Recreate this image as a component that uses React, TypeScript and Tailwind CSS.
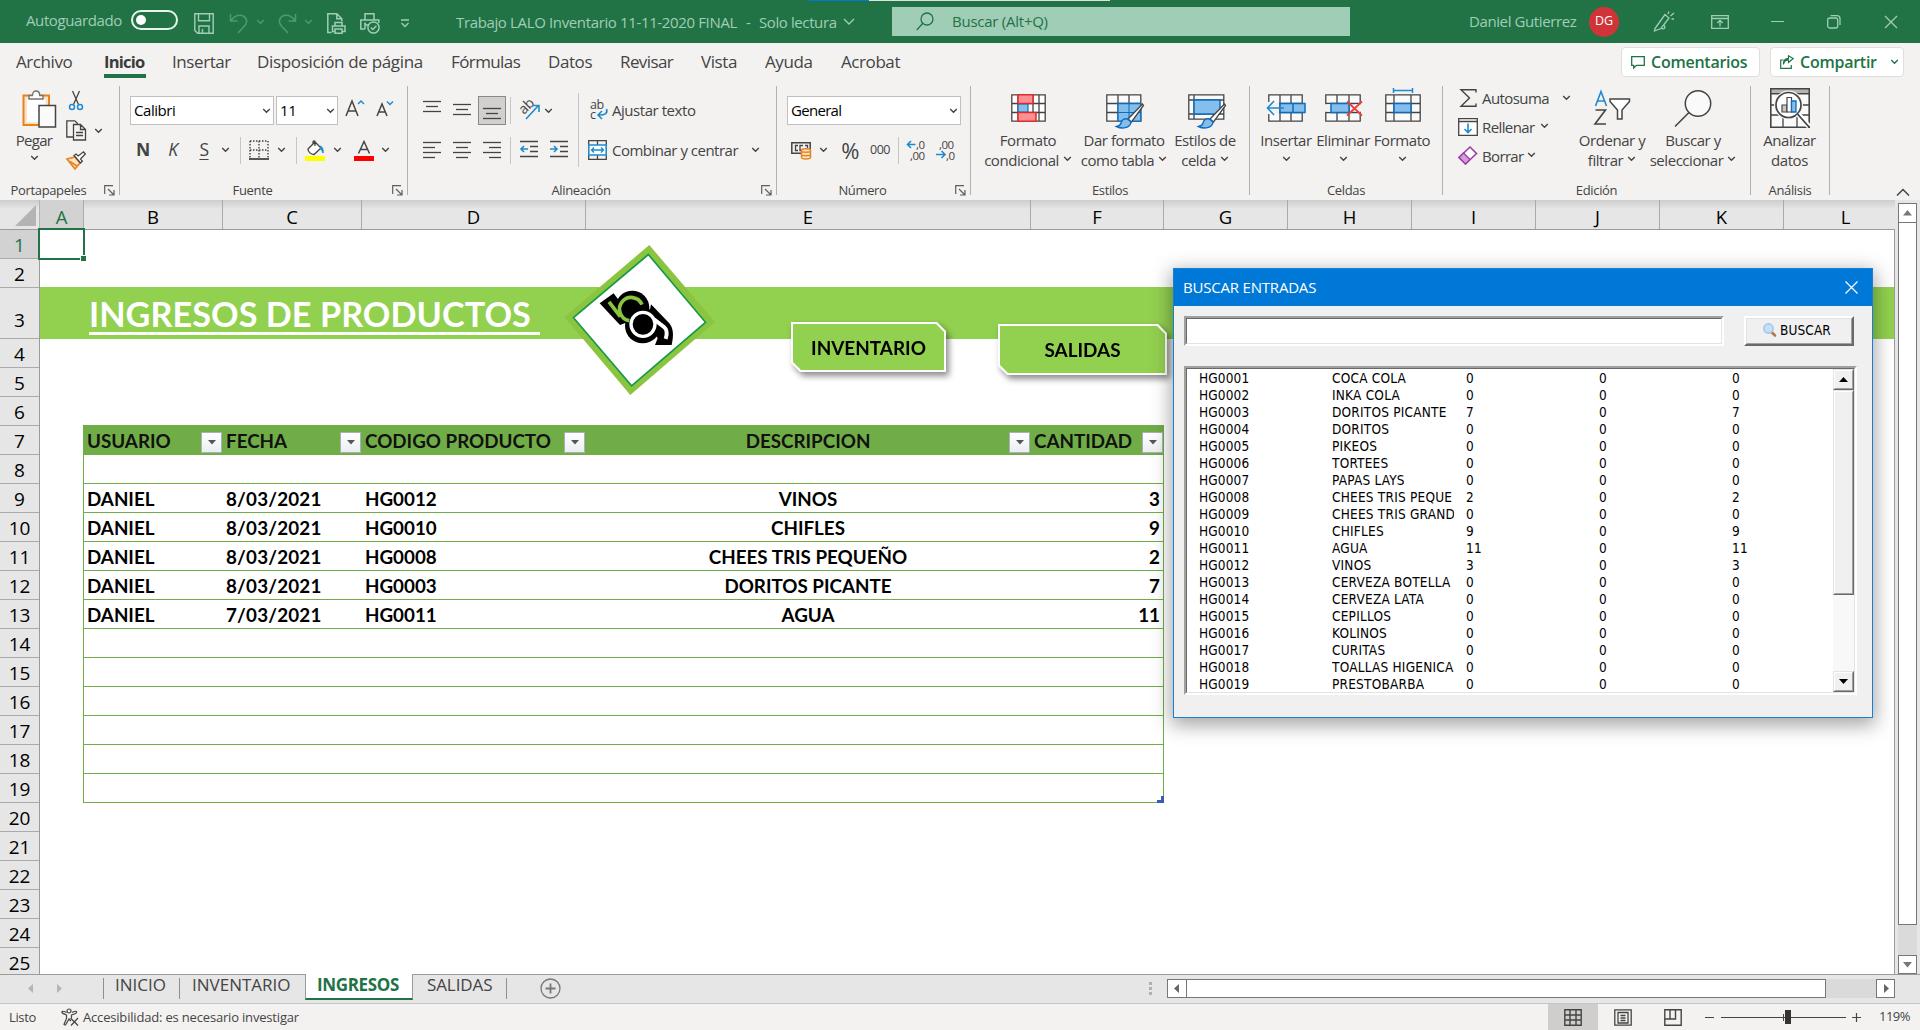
import type { ReactNode } from "react";

const INK = "#444444";
const BLUE = "#1e8bcd";
const MINT = "#a0cdb5";
const DIM = "#4d9a70";

function Svg({ w, h, className = "", children }: { w: number; h: number; className?: string; children: ReactNode }) {
  return (
    <svg width={w} height={h} viewBox={`0 0 ${w} ${h}`} fill="none" className={`shrink-0 overflow-visible ${className}`}>
      {children}
    </svg>
  );
}

function Chevron({ className = "", color = INK }: { className?: string; color?: string }) {
  return (
    <Svg w={9} h={6} className={className}>
      <path d="M1.2 1l3.300 3.300L7.800 1" stroke={color} strokeWidth="1.400" />
    </Svg>
  );
}

/* ---------- Title bar ---------- */

function TitleBar() {
  return (
    <header className="relative flex h-[43px] shrink-0 items-center bg-[#217346] text-[15px] tracking-[-0.4px] whitespace-nowrap text-[#a0cdb5]">
      <div className="absolute top-0 left-[809px] flex h-px w-[301px]">
        <div className="w-[60px] bg-[#0078d7]" />
        <div className="grow bg-[#e1e1e1]" />
      </div>
      <span className="ml-[26px] w-[105px] pb-0.5">Autoguardado</span>
      <div className="mb-[3px] flex h-5 w-[47px] items-center rounded-full border-2 border-[#e8f3ec] pl-[3px]">
        <div className="size-[10px] rounded-full bg-white" />
      </div>
      <Svg w={20} h={21} className="mt-1 ml-4">
        <path d="M.8.8h18.400v19.400H3.600L.8 17.400zM4.500.8v7h11v-7M5 20v-7h10v7M8.500 20v-4" stroke={MINT} strokeWidth="1.400" />
      </Svg>
      <Svg w={20} h={21} className="mt-1 ml-[15px]">
        <path d="M1.500 1v7h7M1.800 7.800C5 3.500 9 1.500 13 2.500c5 1.500 6 7 2.500 10.500L9 20" stroke={DIM} strokeWidth="1.500" />
      </Svg>
      <Chevron className="ml-[7px]" color={DIM} />
      <Svg w={20} h={21} className="mt-1 ml-3">
        <path d="M18.500 1v7h-7M18.200 7.800C15 3.500 11 1.500 7 2.500c-5 1.500-6 7-2.500 10.500L11 20" stroke={DIM} strokeWidth="1.500" />
      </Svg>
      <Chevron className="ml-[7px]" color={DIM} />
      <Svg w={19} h={21} className="mt-1 ml-[14px]">
        <path d="M4.500 19.500H.8V.8h9l5 5v2.500M9.800.8v5h5M8 13V9.500h7V13M8 18.500H5.500V13h12.500v5.500H15M8 16h7v4.200H8z" stroke={MINT} strokeWidth="1.500" />
      </Svg>
      <Svg w={21} h={21} className="mt-1 ml-[14px]">
        <path d="M5 7V.8h9V7M5 16H.8V7h18v3M4 10.500h2M5 16v-4h4" stroke={MINT} strokeWidth="1.500" />
        <circle cx="13.500" cy="14.500" r="5.600" stroke={MINT} strokeWidth="1.500" />
        <path d="M10.800 14.500l2 2 3.600-3.800" stroke={MINT} strokeWidth="1.500" />
      </Svg>
      <Svg w={10} h={9} className="mt-1 ml-[19px]">
        <path d="M1 1h8M1.500 4l3.500 3.500L8.500 4" stroke={MINT} strokeWidth="1.400" />
      </Svg>
      <span className="ml-[46px] w-[290px] pt-0.5 pb-px tracking-[-0.36px]">Trabajo LALO Inventario 11-11-2020 FINAL</span>
      <span className="w-[13px] pt-0.5">-</span>
      <span className="w-[84px] pt-0.5">Solo lectura</span>
      <Svg w={12} h={8}>
        <path d="M1 1l5 5 5-5" stroke={MINT} strokeWidth="1.400" />
      </Svg>
      <div className="ml-[37px] flex h-[29px] w-[458px] items-center bg-[#a0cdb5] text-[#217346]">
        <Svg w={18} h={19} className="ml-6">
          <circle cx="11" cy="7" r="6" stroke="#217346" strokeWidth="1.300" />
          <path d="M6.800 11.300L.8 18" stroke="#217346" strokeWidth="1.300" />
        </Svg>
        <span className="ml-[18px] tracking-[-0.25px]">Buscar (Alt+Q)</span>
      </div>
      <span className="ml-[119px] w-[120px]">Daniel Gutierrez</span>
      <span className="flex size-[30px] items-center justify-center rounded-full bg-[#d13438] text-[12.500px] tracking-normal text-white">DG</span>
      <Svg w={22} h={21} className="ml-[34px]">
        <path d="M2 17.500L12 3.500l4 3.500-8 10.500-4 1.500-2.500 1zM8 17c3 2 5 0 3-3M15 3l1-2.500M17.500 5L21 2M18.500 8h2.500" stroke={MINT} strokeWidth="1.300" />
      </Svg>
      <Svg w={18} h={14} className="ml-[36px]">
        <path d="M.7.7h16.600v12.600H.7zM.7 3.500h16.600M9 11.500v-6M6.300 8L9 5.300 11.700 8" stroke={MINT} strokeWidth="1.300" />
      </Svg>
      <div className="ml-[42px] h-px w-[13px] bg-[#a0cdb5]" />
      <Svg w={14} h={14} className="ml-[43px]">
        <rect x=".7" y="3" width="10" height="10" rx="2" stroke={MINT} strokeWidth="1.300" />
        <path d="M3.500.7h6.500a3 3 0 013 3V10" stroke={MINT} strokeWidth="1.300" />
      </Svg>
      <Svg w={14} h={14} className="ml-[43px]">
        <path d="M1 1l12 12M13 1L1 13" stroke={MINT} strokeWidth="1.300" />
      </Svg>
    </header>
  );
}

/* ---------- Ribbon tabs ---------- */

function RibbonTabs() {
  return (
    <nav className="flex h-[37px] shrink-0 items-center pt-[1px] text-[17px] tracking-[-0.42px] whitespace-nowrap text-[#444]">
      <span className="ml-4 w-[88px]">Archivo</span>
      <span className="relative w-[68px] text-[16.500px] font-bold tracking-[-0.75px] text-[#3b3b3b]">
        Inicio
        <span className="absolute -bottom-[4px] left-0 h-1 w-[42px] bg-[#217346]" />
      </span>
      <span className="w-[85px]">Insertar</span>
      <span className="w-[194px] tracking-[-0.33px]">Disposición de página</span>
      <span className="w-[97px] tracking-[-0.6px]">Fórmulas</span>
      <span className="w-[72px]">Datos</span>
      <span className="w-[81px] tracking-[-0.6px]">Revisar</span>
      <span className="w-[64px]">Vista</span>
      <span className="w-[76px]">Ayuda</span>
      <span className="w-[80px]">Acrobat</span>
      <div className="ml-[700px] flex h-[30px] w-[139px] items-center rounded border border-[#e1dfdd] bg-white text-[16px] font-semibold tracking-[-0.25px] text-[#217346]">
        <Svg w={14} h={13} className="ml-[9px]">
          <path d="M.7.7h12.600v8.600H5.500L2.700 12V9.300h-2z" stroke="#217346" strokeWidth="1.300" />
        </Svg>
        <span className="ml-1.5">Comentarios</span>
      </div>
      <div className="ml-2.5 flex h-[30px] w-[134px] items-center rounded border border-[#e1dfdd] bg-white text-[16px] font-semibold tracking-[-0.25px] text-[#217346]">
        <Svg w={14} h={14} className="ml-[9px]">
          <path d="M3.500 5H.7v8.300h10.600V10M3.500 9.500c.5-3 2-4.700 5-4.700V7.500l4.700-4L8.500.8v2.500C5 3.500 3 6 3.500 9.500z" stroke="#217346" strokeWidth="1.200" />
        </Svg>
        <span className="ml-1.5 w-[90px]">Compartir</span>
        <Chevron color="#217346" />
      </div>
    </nav>
  );
}

/* ---------- Ribbon ---------- */

function Group({ label, width, launcher = false, labelClass = "", children }: { label: string; width: string; launcher?: boolean; labelClass?: string; children: ReactNode }) {
  return (
    <section className={`flex h-[109px] shrink-0 flex-col border-r border-[#b3b0ad] ${width}`}>
      <div className="flex h-[95px] shrink-0">{children}</div>
      <div className={`relative flex h-[18px] shrink-0 items-center justify-center text-[13px] tracking-[-0.35px] ${labelClass}`}>
        {label}
        {launcher && (
          <Svg w={11} h={11} className="absolute top-1 right-1">
            <path d="M.7 9V.7H9M4 4l5.500 5.500M10 5v5H5" stroke="#605e5c" strokeWidth="1.200" />
          </Svg>
        )}
      </div>
    </section>
  );
}

function BigButton({ icon, lines, chevron = "none", width }: { icon: ReactNode; lines: string[]; chevron?: "none" | "inline" | "below"; width: string }) {
  return (
    <div className={`flex shrink-0 flex-col items-center whitespace-nowrap ${width}`}>
      <div className="flex h-[44px] items-start justify-center">{icon}</div>
      {lines.map((line, i) => (
        <span key={line} className="flex h-5 items-center gap-1">
          {line}
          {chevron === "inline" && i === lines.length - 1 && <Chevron className="-mt-0.5" />}
        </span>
      ))}
      {chevron === "below" && <Chevron className="mt-[6px]" />}
    </div>
  );
}

function Divider({ className = "" }: { className?: string }) {
  return <div className={`w-px shrink-0 bg-[#c8c6c4] ${className}`} />;
}

function Combo({ text, className }: { text: string; className: string }) {
  return (
    <div className={`flex h-[29px] shrink-0 items-center justify-between border border-[#c2c0be] bg-white pr-0.5 pl-[3px] text-black ${className}`}>
      <span className="-mt-px">{text}</span>
      <Chevron />
    </div>
  );
}

function AlignIcon({ rows, className = "" }: { rows: [number, number, number][]; className?: string }) {
  return (
    <Svg w={18} h={21} className={className}>
      {rows.map(([y, x1, x2]) => (
        <path key={y} d={`M${x1} ${y + 0.5}H${x2}`} stroke={INK} strokeWidth="1.300" />
      ))}
    </Svg>
  );
}

function ClipboardGroup() {
  return (
    <Group label="Portapapeles" width="w-[120px]" launcher labelClass="pr-[22px]">
      <div className="ml-[17px] flex w-[38px] flex-col items-center">
        <Svg w={35} h={39} className="mt-1 ml-1.5">
          <path d="M1.500 5.500h25.500v29.500H1.500z" fill="#fbe3c4" stroke="#e6831f" strokeWidth="2" />
          <path d="M5 9h18.500v23H5z" fill="#fff" />
          <path d="M7 9V5.500h3.500C10.500 2.500 12 1 14 1s3.700 1.500 3.700 4.500H21V9z" fill="#fff" stroke="#767472" strokeWidth="1.400" />
          <path d="M17 15.500h16.500v21.500H17z" fill="#fafafa" stroke="#444" strokeWidth="1.500" />
        </Svg>
        <span className="mt-px -ml-1 tracking-[-0.75px]">Pegar</span>
        <Chevron className="mt-[5px] -ml-1" />
      </div>
      <div className="ml-[11px] flex flex-col">
        <Svg w={16} h={21} className="mt-1 ml-0.5">
          <path d="M4.500 1l6 13.500M11.500 1l-6 13.500" stroke={INK} strokeWidth="1.300" />
          <circle cx="4" cy="17" r="2.500" stroke={BLUE} strokeWidth="1.500" />
          <circle cx="12" cy="17" r="2.500" stroke={BLUE} strokeWidth="1.500" />
        </Svg>
        <div className="mt-[9px] flex items-center">
          <Svg w={21} h={21}>
            <path d="M7 17H.8V.8h8l3 3" stroke={INK} strokeWidth="1.300" />
            <path d="M7.500 4.500h7l5 5v10.500h-12zM14.500 4.500v5h5M10 12.500h7M10 15.500h7" stroke={INK} strokeWidth="1.300" />
          </Svg>
          <Chevron className="ml-[7px]" />
        </div>
        <Svg w={21} h={20} className="mt-[9px]">
          <path d="M1 9l8-2 5 6-5 6z" fill="#fbe3c4" stroke="#e6831f" strokeWidth="1.700" />
          <path d="M4 11.500L11 16" stroke="#e6831f" strokeWidth="1.500" />
          <path d="M8 5.500l6.500 7.500 1.800-1.800-1.800-2.200 4.800-5L17.500 1.800 12.200 6 10 4z" fill="#fff" stroke={INK} strokeWidth="1.300" />
        </Svg>
      </div>
    </Group>
  );
}

function FontGroup() {
  return (
    <Group label="Fuente" width="w-[288px]" launcher labelClass="pr-[22px]">
      <div className="flex w-full flex-col pt-2.5">
        <div className="flex h-[29px] items-center">
          <Combo text="Calibri" className="ml-[10px] w-[144px]" />
          <Combo text="11" className="ml-0.5 w-[62px]" />
          <Svg w={20} h={20} className="mb-1.5 ml-[7px]">
            <path d="M1 18L7 3l6 15M3 13h8" stroke={INK} strokeWidth="1.500" />
            <path d="M13 6l3-3 3 3" stroke={BLUE} strokeWidth="1.500" />
          </Svg>
          <Svg w={18} h={18} className="mb-1 ml-[11px]">
            <path d="M1 16L6 4l5 12M2.800 12h6.500" stroke={INK} strokeWidth="1.500" />
            <path d="M11 1.500l3 3 3-3" stroke={BLUE} strokeWidth="1.500" />
          </Svg>
        </div>
        <div className="mt-[11px] flex h-[28px] items-center">
          <span className="-mt-0.5 ml-[13px] w-5 text-center text-[17.500px] font-bold">N</span>
          <span className="-mt-0.5 ml-[10px] w-5 text-center text-[17.500px] italic">K</span>
          <span className="-mt-0.5 ml-[11px] w-5 text-center text-[17.500px] underline underline-offset-[3px]">S</span>
          <Chevron className="ml-[7px]" />
          <Divider className="ml-2.5 h-[27px]" />
          <Svg w={20} h={20} className="ml-2">
            <path d="M1 1h18M1 10h18M1 1v17M10 1v17M19 1v17" stroke={INK} strokeWidth="1.400" strokeDasharray="1.500 1.500" />
            <path d="M0 19h20" stroke={INK} strokeWidth="1.800" />
          </Svg>
          <Chevron className="ml-[8px]" />
          <Divider className="ml-2.5 h-[27px]" />
          <Svg w={20} h={21} className="ml-2">
            <path d="M3 9l7-7 6 6-7 6.500c-3 0-6-2.500-6-5.500zM10 6V1.500C10 .5 8 .5 8 2v3" fill="#fff" stroke={INK} strokeWidth="1.300" />
            <path d="M15 6c3 1 3.500 4 3 7-1-2-1.500-3.500-3-4.500" fill={BLUE} stroke={BLUE} />
            <path d="M0 16h20v5H0z" fill="#ffff00" />
          </Svg>
          <Chevron className="ml-2" />
          <Svg w={20} h={21} className="ml-3">
            <path d="M4.500 13.500L10 1.500l5.500 12M6.500 9.500h7" stroke={INK} strokeWidth="1.500" />
            <path d="M0 16h20v5H0z" fill="#ff0000" />
          </Svg>
          <Chevron className="ml-[7px]" />
        </div>
      </div>
    </Group>
  );
}

function AlignGroup() {
  return (
    <Group label="Alineación" width="w-[369px]" launcher labelClass="pr-[22px]">
      <div className="flex w-[170px] flex-col pt-2.5">
        <div className="flex h-[29px] items-center">
          <AlignIcon className="ml-[15px]" rows={[[1, 0, 18], [6, 3, 15], [11, 0, 18]]} />
          <AlignIcon className="ml-3" rows={[[4, 0, 18], [9, 3, 15], [14, 0, 18]]} />
          <div className="ml-[7px] flex h-[29px] w-[28px] items-center justify-center border border-[#8a8886] bg-[#d2d0ce]">
            <AlignIcon rows={[[8, 0, 18], [13, 3, 15], [18, 0, 18]]} />
          </div>
          <Divider className="ml-1 h-[27px]" />
          <Svg w={22} h={21} className="mb-0.5 ml-2">
            <text x="0" y="0" transform="translate(5 16) rotate(-45)" fill={INK} fontSize="14" fontFamily="Open Sans">ab</text>
            <path d="M7 20L19 7M13.500 6.500H20V13" stroke={BLUE} strokeWidth="1.600" />
          </Svg>
          <Chevron className="ml-[3px]" />
        </div>
        <div className="mt-[11px] flex h-[28px] items-center">
          <AlignIcon className="mb-0.5 ml-[15px]" rows={[[3, 0, 18], [8, 0, 12], [13, 0, 18], [18, 0, 12]]} />
          <AlignIcon className="mb-0.5 ml-3" rows={[[3, 0, 18], [8, 3, 15], [13, 0, 18], [18, 3, 15]]} />
          <AlignIcon className="mb-0.5 ml-3" rows={[[3, 0, 18], [8, 6, 18], [13, 0, 18], [18, 6, 18]]} />
          <Divider className="ml-[9px] h-[27px]" />
          <Svg w={18} h={20} className="mb-0.5 ml-[9px]">
            <path d="M0 2.500h18M10 7.500h8M10 12.500h8M0 17.500h18" stroke={INK} strokeWidth="1.300" />
            <path d="M8 10H1.500M4 7l-3 3 3 3" stroke={BLUE} strokeWidth="1.600" />
          </Svg>
          <Svg w={18} h={20} className="mb-0.5 ml-3">
            <path d="M0 2.500h18M10 7.500h8M10 12.500h8M0 17.500h18" stroke={INK} strokeWidth="1.300" />
            <path d="M0 10h6.500M4 7l3 3-3 3" stroke={BLUE} strokeWidth="1.600" />
          </Svg>
        </div>
      </div>
      <Divider className="mt-[7px] h-[74px]" />
      <div className="flex flex-col pt-2.5 pl-[9px]">
        <div className="flex h-[29px] items-center">
          <Svg w={20} h={20} className="mb-0.5 ml-[2px]">
            <text x="0" y="8.500" fill={INK} fontSize="12.500" fontFamily="Open Sans">ab</text>
            <text x="0" y="18.500" fill={INK} fontSize="12.500" fontFamily="Open Sans">c</text>
            <path d="M16.500 9c1.500 4-1 6.500-8.500 6M12 11l-4 4 4 4" stroke={BLUE} strokeWidth="1.600" />
          </Svg>
          <span className="-mt-0.5 ml-[2px]">Ajustar texto</span>
        </div>
        <div className="mt-[11px] flex h-[28px] items-center">
          <Svg w={19} h={20}>
            <path d="M.7.7h17.600v18.600H.7zM9.500.7V5M9.500 15v4" stroke={INK} strokeWidth="1.300" />
            <path d="M.8 5h17.400v10H.8z" fill="#fff" stroke={BLUE} strokeWidth="1.600" />
            <path d="M3.500 10h12M6 7.500L3.500 10 6 12.500M13 7.500l2.500 2.500-2.500 2.500" stroke={BLUE} strokeWidth="1.400" />
          </Svg>
          <span className="ml-[5px] w-[139px] tracking-[-0.5px]">Combinar y centrar</span>
          <Chevron />
        </div>
      </div>
    </Group>
  );
}

function NumberGroup() {
  return (
    <Group label="Número" width="w-[194px]" launcher labelClass="pr-[22px]">
      <div className="flex flex-col pt-2.5">
        <Combo text="General" className="ml-[10px] w-[174px] tracking-[-0.7px]" />
        <div className="mt-[11px] flex h-[28px] items-center">
          <Svg w={21} h={19} className="ml-[14px]">
            <path d="M10 12.300H.8V1.800h18.400V8" stroke={INK} strokeWidth="1.500" />
            <path d="M7 4.500H4.500v5H7M12 4.500H9v5h2M16.500 7V4.500H14" stroke={INK} strokeWidth="1.300" />
            <path d="M10.500 9.500v6.800c0 1 2 1.700 4.500 1.700s4.500-.7 4.500-1.700V9.500c0-2.300-9-2.300-9 0zM10.500 10c0 1.500 9 1.500 9 0M10.500 13.500c0 1.500 9 1.500 9 0" fill="#fbe3c4" stroke="#e6831f" strokeWidth="1.500" />
          </Svg>
          <Chevron className="ml-[7px]" />
          <span className="ml-[11px] w-[22px] text-center text-[22px] leading-none">%</span>
          <span className="ml-[7px] w-[24px] text-center text-[12.500px] tracking-[-0.500px]">000</span>
          <Divider className="ml-[6px] h-[27px]" />
          <Svg w={20} h={22} className="ml-[7px]">
            <path d="M9.500 5.500H1.500M5 2L1.500 5.500 5 9" stroke={BLUE} strokeWidth="1.600" />
            <text x="10" y="9.500" fill={INK} fontSize="11.500" letterSpacing="-.5" fontFamily="Open Sans">,0</text>
            <text x="4" y="20.500" fill={INK} fontSize="11.500" letterSpacing="-.5" fontFamily="Open Sans">,00</text>
          </Svg>
          <Svg w={20} h={22} className="ml-2.5">
            <text x="3" y="9.500" fill={INK} fontSize="11.500" letterSpacing="-.5" fontFamily="Open Sans">,00</text>
            <path d="M0 15.500h8.500M5.500 12L9 15.500 5.500 19" stroke={BLUE} strokeWidth="1.600" />
            <text x="10" y="20.500" fill={INK} fontSize="11.500" letterSpacing="-.5" fontFamily="Open Sans">,0</text>
          </Svg>
        </div>
      </div>
    </Group>
  );
}

function Brush() {
  return (
    <>
      <path d="M36.500 10L22 25l3.500 3L37.500 11.500z" fill="#fff" stroke={INK} strokeWidth="1.300" />
      <path d="M21.500 25c-4-1-6 1.500-6.500 4-.5 2-2 3-4.500 3.500 5 2.500 14 2 14.500-4.500z" fill="#83beec" stroke="#0f6cbd" strokeWidth="1.400" />
    </>
  );
}

function StylesGroup() {
  return (
    <Group label="Estilos" width="w-[279px]">
      <BigButton
        width="w-[90px] ml-[12px]"
        lines={["Formato", "condicional"]}
        chevron="inline"
        icon={
          <Svg w={35} h={28} className="mt-2">
            <path d="M.8.8h33.400v26.400H.8zM.8 9.500h33.400M.8 18.500h33.400M7 .8v26.400M28 .8v26.400M22 .8v26.400" fill="#fff" stroke={INK} strokeWidth="1.300" />
            <path d="M7 10h10v8H7z" fill="#83beec" stroke="#0f6cbd" strokeWidth="1.200" />
            <path d="M7 .8h15v8.700H7zM7 18.500h18v8.700H7z" fill="#ff8f94" stroke="#d92c2c" strokeWidth="1.500" />
          </Svg>
        }
      />
      <BigButton
        width="w-[90px] ml-[6px]"
        lines={["Dar formato", "como tabla"]}
        chevron="inline"
        icon={
          <Svg w={38} h={34} className="mt-2 ml-0.5">
            <path d="M.8.8h34v26.400H.8zM.8 9.500h34M.8 18.500h34M12 .8v26.400M23 .8v26.400" fill="#fafafa" stroke={INK} strokeWidth="1.300" />
            <path d="M12 9.500h22.800v17.700H12z" fill="#83beec" stroke="#0f6cbd" strokeWidth="1.300" />
            <path d="M12 18.500h22.800M23 9.500v17.700" stroke="#0f6cbd" />
            <Brush />
          </Svg>
        }
      />
      <BigButton
        width="w-[74px] -ml-px"
        lines={["Estilos de", "celda"]}
        chevron="inline"
        icon={
          <Svg w={38} h={34} className="mt-2 ml-[3px]">
            <path d="M.8.8h35v24.400H.8zM.8 6h35M.8 20h35M6 .8v24.400" fill="#fafafa" stroke={INK} strokeWidth="1.300" />
            <path d="M6 6h26v14H6z" fill="#83beec" stroke="#0f6cbd" strokeWidth="1.500" />
            <Brush />
          </Svg>
        }
      />
    </Group>
  );
}

function CellsGroup() {
  return (
    <Group label="Celdas" width="w-[193px]">
      <BigButton
        width="w-[50px] ml-[11px]"
        lines={["Insertar"]}
        chevron="below"
        icon={
          <Svg w={40} h={29} className="mt-2">
            <path d="M2.800.8h33.400v26.400H2.800zM2.800 9.500h33.400M2.800 18.500h33.400M14 .8v26.400M25 .8v26.400" fill="#fafafa" stroke={INK} strokeWidth="1.300" />
            <path d="M14 9.500h25v9H14zM27 9.500v9" fill="#83beec" stroke="#0f6cbd" strokeWidth="1.500" />
            <path d="M0 8h13v12H0z" fill="#f3f2f1" />
            <path d="M18 14H2M8 7L1.500 14 8 21" stroke={BLUE} strokeWidth="1.600" />
          </Svg>
        }
      />
      <BigButton
        width="w-[58px] ml-[3px]"
        lines={["Eliminar"]}
        chevron="below"
        icon={
          <Svg w={38} h={29} className="mt-2 ml-px">
            <path d="M.8.8h34.400v26.400H.8zM.8 9.500h34.400M.8 18.500h34.400M12 .8v26.400M24 .8v26.400" fill="#fafafa" stroke={INK} strokeWidth="1.300" />
            <path d="M0 10.200h6v7.600H0zM30 10.200h8v7.600h-8z" fill="#f3f2f1" />
            <path d="M6 9.500h18v9H6z" fill="#83beec" stroke="#0f6cbd" strokeWidth="1.500" />
            <path d="M22 7.500l15 14M37 7.500l-15 14" stroke="#e8413d" strokeWidth="1.800" />
          </Svg>
        }
      />
      <BigButton
        width="w-[60px]"
        lines={["Formato"]}
        chevron="below"
        icon={
          <Svg w={36} h={35} className="mt-0.5 ml-px">
            <path d="M.8 6.800h34.400v26.400H.8zM.8 15.500h34.400M.8 24.500h34.400M9 6.800v26.400M26 6.800v26.400" fill="#fafafa" stroke={INK} strokeWidth="1.300" />
            <path d="M9 15.500h17v9H9z" fill="#83beec" stroke="#0f6cbd" strokeWidth="1.500" />
            <path d="M8.500 2.500h19M8.500 0v5M27.500 0v5" stroke={BLUE} strokeWidth="1.500" />
          </Svg>
        }
      />
    </Group>
  );
}

function EditGroup() {
  return (
    <Group label="Edición" width="w-[308px]">
      <div className="-mt-[3px] ml-[15px] flex w-[118px] flex-col">
        <div className="flex h-[29px] items-center pt-px">
          <Svg w={20} h={18}>
            <path d="M18 3.500V.8H3L11.500 9 3 17.200h15v-2.700" stroke={INK} strokeWidth="1.400" />
          </Svg>
          <span className="ml-[4px] w-[80px] tracking-[-0.58px]">Autosuma</span>
          <Chevron />
        </div>
        <div className="flex h-[29px] items-center">
          <Svg w={20} h={18}>
            <path d="M.7.7h18.600v16.600H.7zM.7 3.500h18.600" fill="#fff" stroke={INK} strokeWidth="1.300" />
            <path d="M10 5.500v8.500M6.500 11L10 14.500l3.500-3.500" stroke={BLUE} strokeWidth="1.600" />
          </Svg>
          <span className="ml-[4px] w-[58px] tracking-[-0.6px]">Rellenar</span>
          <Chevron className="-mt-0.5" />
        </div>
        <div className="flex h-[29px] items-center">
          <Svg w={20} h={19}>
            <path d="M12 1l6.500 6.500-11 10.500L1 11.500z" fill="#fff" stroke="#9b3fa5" strokeWidth="1.600" />
            <path d="M5.500 7L12 13.500 7.500 18 1 11.500z" fill="#d59cdb" stroke="#9b3fa5" strokeWidth="1.400" />
          </Svg>
          <span className="ml-[4px] w-[45px] tracking-[-0.65px]">Borrar</span>
          <Chevron className="-mt-0.5" />
        </div>
      </div>
      <BigButton
        width="w-[72px]"
        lines={["Ordenar y", "filtrar"]}
        chevron="inline"
        icon={
          <Svg w={37} h={36} className="mt-1 ml-px">
            <path d="M1.500 16L7 1.500 12.500 16M3.500 11h7" stroke={BLUE} strokeWidth="1.600" />
            <path d="M1.500 20h10L1 34h11" stroke={INK} strokeWidth="1.600" />
            <path d="M16 9h19.500v2.500L28 20v9h-4.500v-9L16 11.500z" fill="#fff" stroke={INK} strokeWidth="1.500" />
          </Svg>
        }
      />
      <BigButton
        width="w-[92px] -ml-px"
        lines={["Buscar y", "seleccionar"]}
        chevron="inline"
        icon={
          <Svg w={38} h={38} className="mt-1">
            <circle cx="24" cy="13.500" r="12.700" fill="#fafafa" stroke={INK} strokeWidth="1.500" />
            <path d="M15 22.500L1 36.500" stroke={INK} strokeWidth="1.600" />
          </Svg>
        }
      />
    </Group>
  );
}

function AnalysisGroup() {
  return (
    <Group label="Análisis" width="w-[79px]">
      <BigButton
        width="w-[77px]"
        lines={["Analizar", "datos"]}
        icon={
          <Svg w={40} h={40} className="mt-0.5">
            <path d="M.8.800h38.400v38.400H.8z" fill="#fafafa" stroke={INK} strokeWidth="1.600" />
            <path d="M.8.800h38.400v5H.8z" fill="#b5b3b1" stroke={INK} strokeWidth="1.400" />
            <path d="M1 17h38M1 27h38M13 6v33M27 6v33" stroke={INK} strokeWidth="1.300" />
            <circle cx="18.500" cy="17" r="14.500" fill="#f3f2f1" />
            <circle cx="18.500" cy="17" r="12.500" fill="#fff" stroke={INK} strokeWidth="1.700" />
            <path d="M28 26l11 12.500" stroke="#fff" strokeWidth="5" />
            <path d="M27.500 26l11.500 13" stroke={INK} strokeWidth="1.800" />
            <path d="M12 17h5v7h-5z" fill="#c8c6c4" stroke={INK} strokeWidth="1.200" />
            <path d="M17 9.500h4.500V24H17z" fill="#fff" stroke={INK} strokeWidth="1.200" />
            <path d="M21.500 13H26v11h-4.500z" fill="#83beec" stroke="#0f6cbd" strokeWidth="1.300" />
          </Svg>
        }
      />
    </Group>
  );
}

function Ribbon() {
  return (
    <div className="flex h-[120px] shrink-0 pt-[6px] text-[15px] leading-5 tracking-[-0.45px] whitespace-nowrap text-[#444]">
      <ClipboardGroup />
      <FontGroup />
      <AlignGroup />
      <NumberGroup />
      <StylesGroup />
      <CellsGroup />
      <EditGroup />
      <AnalysisGroup />
      <Svg w={14} h={9} className="mt-[102px] ml-[66px]">
        <path d="M1 7.500l6-6 6 6" stroke={INK} strokeWidth="1.500" />
      </Svg>
    </div>
  );
}

/* ---------- Worksheet ---------- */

const columns = [
  { name: "A", width: "w-[44px]" },
  { name: "B", width: "w-[139px]" },
  { name: "C", width: "w-[139px]" },
  { name: "D", width: "w-[224px]" },
  { name: "E", width: "w-[445px]" },
  { name: "F", width: "w-[133px]" },
  { name: "G", width: "w-[124px]" },
  { name: "H", width: "w-[124px]" },
  { name: "I", width: "w-[124px]" },
  { name: "J", width: "w-[124px]" },
  { name: "K", width: "w-[124px]" },
  { name: "L", width: "w-[124px]" },
];

const entries = [
  ["DANIEL", "8/03/2021", "HG0012", "VINOS", "3"],
  ["DANIEL", "8/03/2021", "HG0010", "CHIFLES", "9"],
  ["DANIEL", "8/03/2021", "HG0008", "CHEES TRIS PEQUEÑO", "2"],
  ["DANIEL", "8/03/2021", "HG0003", "DORITOS PICANTE", "7"],
  ["DANIEL", "7/03/2021", "HG0011", "AGUA", "11"],
];
const tableRows: string[][] = [[], ...entries, [], [], [], [], [], []];
const headings = ["USUARIO", "FECHA", "CODIGO PRODUCTO", "DESCRIPCION", "CANTIDAD"];
const cellClass = [
  "w-[138px] pl-[3px]",
  "w-[139px] pl-1 tracking-[0.2px]",
  "w-[224px] pl-1",
  "w-[445px] pl-px text-center",
  "w-[133px] text-right pr-[3px]",
];
const headClass = [
  "w-[138px] pl-[3px]",
  "w-[139px] pl-1",
  "w-[224px] pl-1",
  "w-[445px] pl-px justify-center",
  "w-[133px] pl-1",
];

function ColumnHeaders() {
  return (
    <div className="flex h-[30px] shrink-0 border-b border-[#9b9b9b] bg-linear-to-b from-[#cdcdcd] to-[#e6e6e6] to-[9px] text-[18.500px]">
      <div className="flex w-[40px] shrink-0 items-end justify-end border-r border-[#b4b4b4] pr-[3px] pb-[3px]">
        <Svg w={21} h={21}>
          <path d="M21 0v21H0z" fill="#b4b4b4" />
        </Svg>
      </div>
      {columns.map((c) => (
        <div
          key={c.name}
          className={`flex shrink-0 items-center justify-center border-r border-[#ababab] pt-[4px] ${c.width} ${c.name === "A" ? "bg-[#d2d2d2] text-[#217346]" : "text-black"}`}
        >
          {c.name}
        </div>
      ))}
    </div>
  );
}

function RowHeaders() {
  return (
    <div className="flex w-10 shrink-0 flex-col overflow-hidden border-r border-[#9b9b9b] bg-[#e6e6e6] text-[19px]">
      {Array.from({ length: 25 }, (_, i) => i + 1).map((n) => (
        <div
          key={n}
          className={`flex shrink-0 items-center justify-center border-b border-[#ababab] ${n === 3 ? "h-[51px] pt-[15px]" : "h-[29px] pt-[2px]"} ${n === 1 ? "bg-[#d2d2d2] text-[#217346]" : "text-black"}`}
        >
          {n}
        </div>
      ))}
    </div>
  );
}

function FilterButton() {
  return (
    <span className="mt-[4px] ml-auto flex size-[21px] shrink-0 items-center justify-center border border-[#a9b0b8] bg-linear-to-b from-white to-[#eceef3]">
      <Svg w={8} h={5}>
        <path d="M0 0h8L4 4.500z" fill="#555" />
      </Svg>
    </span>
  );
}

function ProductTable() {
  return (
    <div className="ml-[43px] w-[1081px] border-x border-[#70ad47] font-[Lato] text-[18.8px] font-bold whitespace-nowrap text-black">
      <div className="flex h-[30px] bg-[#70ad47]">
        {headings.map((h, i) => (
          <div key={h} className={`relative flex shrink-0 items-center pt-[3px] text-[#111] ${headClass[i]}`}>
            {h}
            <span className="absolute top-[3px] right-0">
              <FilterButton />
            </span>
          </div>
        ))}
      </div>
      {tableRows.map((row, r) => (
        <div key={r} className="flex h-[29px] items-center border-b border-[#70ad47]">
          {row.map((v, i) => (
            <span key={i} className={`shrink-0 pt-[3px] ${cellClass[i]}`}>
              {v}
            </span>
          ))}
        </div>
      ))}
    </div>
  );
}

function Logo() {
  return (
    <svg className="absolute top-[14px] left-[524px]" width="152" height="152" viewBox="564 244 152 152" fill="none">
      <path d="M649.300 245L715 322l-84.700 73L564.500 317z" fill="#8bc43f" />
      <path d="M648.300 254.500L705.500 322.300 631.600 385.800 573.500 317.700z" fill="#fff" stroke="#159a4a" strokeWidth="1.700" />
      <g transform="translate(570 240) scale(.3333)">
        <path d="M89 190L131 160 190 240l-40 15z" fill="#000" />
        <circle cx="187" cy="203" r="51" fill="#000" />
        <circle cx="218" cy="257" r="53" fill="#000" />
        <path d="M243 193L298 250c12 15 14 35 7 65H255l8-20-30-50z" fill="#000" />
        <path d="M117 186l34 44" stroke="#8bc43f" strokeWidth="11" />
        <path d="M216 194A35 35 0 1 0 178 242" stroke="#8bc43f" strokeWidth="11" />
        <circle cx="219" cy="253" r="36" fill="#000" stroke="#fff" strokeWidth="10" />
        <path d="M252 238l30 23c10 8 11 18 5 36" stroke="#fff" strokeWidth="12" />
      </g>
    </svg>
  );
}

function SnipButton({ label, className }: { label: string; className: string }) {
  return (
    <div className={`absolute drop-shadow-[3px_4px_3px_rgba(0,0,0,0.45)] ${className}`}>
      <div className="size-full bg-white p-0.5 [clip-path:polygon(0_0,calc(100%-9px)_0,100%_9px,100%_100%,9px_100%,0_calc(100%-9px))]">
        <div className="flex size-full items-center justify-center bg-[#92d050] pt-0.5 font-[Lato] text-[18.9px] font-bold text-black [clip-path:polygon(0_0,calc(100%-8px)_0,100%_8px,100%_100%,8px_100%,0_calc(100%-8px))]">
          {label}
        </div>
      </div>
    </div>
  );
}

/* ---------- Search dialog ---------- */

const stock: [string, string, string, string, string][] = [
  ["HG0001", "COCA COLA", "0", "0", "0"],
  ["HG0002", "INKA COLA", "0", "0", "0"],
  ["HG0003", "DORITOS PICANTE", "7", "0", "7"],
  ["HG0004", "DORITOS", "0", "0", "0"],
  ["HG0005", "PIKEOS", "0", "0", "0"],
  ["HG0006", "TORTEES", "0", "0", "0"],
  ["HG0007", "PAPAS LAYS", "0", "0", "0"],
  ["HG0008", "CHEES TRIS PEQUE", "2", "0", "2"],
  ["HG0009", "CHEES TRIS GRANDE", "0", "0", "0"],
  ["HG0010", "CHIFLES", "9", "0", "9"],
  ["HG0011", "AGUA", "11", "0", "11"],
  ["HG0012", "VINOS", "3", "0", "3"],
  ["HG0013", "CERVEZA BOTELLA", "0", "0", "0"],
  ["HG0014", "CERVEZA LATA", "0", "0", "0"],
  ["HG0015", "CEPILLOS", "0", "0", "0"],
  ["HG0016", "KOLINOS", "0", "0", "0"],
  ["HG0017", "CURITAS", "0", "0", "0"],
  ["HG0018", "TOALLAS HIGENICAS", "0", "0", "0"],
  ["HG0019", "PRESTOBARBA", "0", "0", "0"],
];

const sunken = "border-2 border-t-[#a0a0a0] border-l-[#a0a0a0] border-r-white border-b-white";
const sunkenInner = "border border-t-[#696969] border-l-[#696969] border-r-[#e3e3e3] border-b-[#e3e3e3]";
const raised = "border border-t-[#e3e3e3] border-l-[#e3e3e3] border-r-[#696969] border-b-[#696969]";
const raisedInner = "border border-t-white border-l-white border-r-[#a0a0a0] border-b-[#a0a0a0]";

function SearchDialog() {
  return (
    <div className="absolute top-[38px] left-[1133px] flex h-[450px] w-[700px] flex-col border border-[#1a7fd4] bg-[#f0f0f0] font-['DejaVu_Sans_Condensed','DejaVu_Sans'] text-[13.5px] font-stretch-condensed text-black shadow-[0_5px_18px_2px_rgba(0,0,0,0.36)]">
      <div className="flex h-[37px] shrink-0 items-center justify-between bg-[#0078d7] pr-[14px] pl-[9px] font-['Open_Sans'] text-[15px] font-stretch-normal tracking-[-0.2px] text-white">
        BUSCAR ENTRADAS
        <Svg w={13} h={13}>
          <path d="M.5.5l12 12M12.500.5l-12 12" stroke="#fff" strokeWidth="1.200" />
        </Svg>
      </div>
      <div className="mt-[10px] flex shrink-0 gap-5 pl-[10px]">
        <div className={`h-[30px] w-[540px] ${sunken}`}>
          <div className={`size-full bg-white ${sunkenInner}`} />
        </div>
        <div className="h-[30px] w-[110px] border-2 border-t-white border-r-[#696969] border-b-[#696969] border-l-white">
          <div className="flex size-full items-center justify-center gap-[3px] border border-t-[#e3e3e3] border-r-[#a0a0a0] border-b-[#a0a0a0] border-l-[#e3e3e3] pr-[4px] pb-0.5 tracking-[0.1px]">
            <Svg w={14} h={14} className="-mt-[1px]">
              <path d="M8.500 9l3.500 3.500" stroke="#b5794a" strokeWidth="2.600" strokeLinecap="round" />
              <circle cx="5.500" cy="5.500" r="4.700" fill="#c4e0f8" stroke="#9fc3e6" strokeWidth="1.400" />
            </Svg>
            BUSCAR
          </div>
        </div>
      </div>
      <div className={`mt-5 ml-[10px] h-[329px] w-[673px] shrink-0 ${sunken}`}>
        <div className={`flex size-full justify-between bg-white ${sunkenInner}`}>
          <div className="flex flex-col overflow-hidden pt-px pl-3 leading-[17px]">
            {stock.map((row) => (
              <div key={row[0]} className="flex h-[17px] shrink-0 tracking-[0.15px] whitespace-nowrap">
                <span className="w-[133px]">{row[0]}</span>
                <span className="mr-3 w-[122px] overflow-hidden tracking-[0.22px]">{row[1]}</span>
                <span className="w-[133px]">{row[2]}</span>
                <span className="w-[133px]">{row[3]}</span>
                <span className="w-[60px]">{row[4]}</span>
              </div>
            ))}
          </div>
          <div className="flex w-[21px] flex-col bg-[#f8f8f8]">
            <div className={`h-[21px] shrink-0 ${raised}`}>
              <div className={`flex size-full items-center justify-center bg-[#f0f0f0] ${raisedInner}`}>
                <Svg w={9} h={5}>
                  <path d="M4.500 0L9 5H0z" fill="#000" />
                </Svg>
              </div>
            </div>
            <div className={`h-[205px] shrink-0 ${raised}`}>
              <div className={`size-full bg-[#f0f0f0] ${raisedInner}`} />
            </div>
            <div className={`mt-auto h-[21px] shrink-0 ${raised}`}>
              <div className={`flex size-full items-center justify-center bg-[#f0f0f0] ${raisedInner}`}>
                <Svg w={9} h={5}>
                  <path d="M4.500 5L9 0H0z" fill="#000" />
                </Svg>
              </div>
            </div>
          </div>
        </div>
      </div>
    </div>
  );
}

function Sheet() {
  return (
    <div className="relative flex grow flex-col overflow-hidden border-r border-[#9b9b9b] bg-white">
      <div className="h-[57px] shrink-0" />
      <div className="h-[52px] shrink-0 bg-[#92d050] pl-[49px]">
        <div className="h-[48px] w-[451px] border-b-[3px] border-white pt-[6px] font-[Lato] text-[34.2px] leading-[42px] font-bold tracking-[0.05px] whitespace-nowrap text-white">
          INGRESOS DE PRODUCTOS
        </div>
      </div>
      <div className="h-[86px] shrink-0" />
      <ProductTable />
      <Svg w={7} h={7} className="absolute top-[566px] left-[1117px]">
        <path d="M7 0v7H0V4h4V0z" fill="#3b5bb5" />
      </Svg>
      <Logo />
      <SnipButton label="INVENTARIO" className="top-[92px] left-[751px] h-[50px] w-[155px]" />
      <SnipButton label="SALIDAS" className="top-[94px] left-[958px] h-[51px] w-[169px]" />
      <SearchDialog />
    </div>
  );
}

function VerticalScroll() {
  return (
    <div className="mt-[3px] ml-[3px] flex w-[19px] shrink-0 flex-col bg-[#dadada]">
      <div className="flex h-5 shrink-0 items-center justify-center border border-[#777] bg-white">
        <Svg w={9} h={6}>
          <path d="M4.500 0L9 5.500H0z" fill="#777" />
        </Svg>
      </div>
      <div className="-mt-px h-[703px] shrink-0 border border-[#777] bg-white" />
      <div className="mt-auto flex h-[19px] shrink-0 items-center justify-center border border-[#777] bg-white">
        <Svg w={9} h={6}>
          <path d="M4.500 5.500L9 0H0z" fill="#777" />
        </Svg>
      </div>
    </div>
  );
}

function Worksheet() {
  return (
    <div className="flex h-[774px] shrink-0 bg-[#e6e6e6]">
      <div className="relative flex w-[1895px] shrink-0 flex-col overflow-hidden">
        <ColumnHeaders />
        <div className="flex h-[744px] overflow-hidden">
          <RowHeaders />
          <Sheet />
        </div>
        <div className="absolute top-[28px] left-[38px] h-[32px] w-[47px] border-2 border-[#217346]">
          <div className="absolute -right-[3px] -bottom-[3px] size-[6px] border-t border-l border-white bg-[#217346]" />
        </div>
      </div>
      <VerticalScroll />
    </div>
  );
}

/* ---------- Sheet tabs and status bar ---------- */

function SheetTabs() {
  return (
    <div className="flex h-[29px] shrink-0 items-start border-t border-[#9b9b9b] bg-[#e6e6e6] text-[17px] whitespace-nowrap text-[#444]">
      <Svg w={5} h={9} className="mt-[9px] ml-[28px]">
        <path d="M5 0v9L0 4.500z" fill="#b5b5b5" />
      </Svg>
      <Svg w={5} h={9} className="mt-[9px] ml-[24px]">
        <path d="M0 0v9l5-4.500z" fill="#b5b5b5" />
      </Svg>
      <Divider className="mt-[3px] ml-[41px] h-[21px] bg-[#8f8f8f]!" />
      <span className="w-[75px] pl-[11px] leading-[20px]">INICIO</span>
      <Divider className="mt-[3px] h-[21px] bg-[#8f8f8f]!" />
      <span className="w-[125px] pl-[12px] leading-[20px]">INVENTARIO</span>
      <span className="-mt-px h-[26px] w-[108px] border-x border-b-2 border-x-[#9b9b9b] border-b-[#217346] bg-white pl-[11px] leading-[22px] font-bold tracking-[-0.35px] text-[#217346]">
        INGRESOS
      </span>
      <span className="w-[93px] pl-[14px] leading-[20px] tracking-[-0.1px]">SALIDAS</span>
      <Divider className="mt-[3px] h-[21px] bg-[#8f8f8f]!" />
      <Svg w={21} h={21} className="mt-[3px] ml-[33px]">
        <circle cx="10.500" cy="10.500" r="9.500" stroke="#777" strokeWidth="1.300" />
        <path d="M10.500 5.500v10M5.500 10.500h10" stroke="#777" strokeWidth="1.800" />
      </Svg>
      <Svg w={3} h={14} className="mt-[7px] ml-[588px]">
        <path d="M0 0h3v3H0zM0 5h3v3H0zM0 10h3v3H0z" fill="#b0b0b0" />
      </Svg>
      <div className="mt-[4px] ml-[15px] flex h-[19px] w-[728px] bg-[#dadada]">
        <div className="flex w-5 items-center justify-center border border-[#777] bg-white">
          <Svg w={6} h={9}>
            <path d="M5 0v9L0 4.500z" fill="#666" />
          </Svg>
        </div>
        <div className="-ml-px w-[640px] border border-[#777] bg-white" />
        <div className="ml-auto flex w-[19px] items-center justify-center border border-[#777] bg-white">
          <Svg w={6} h={9}>
            <path d="M1 0v9l5-4.500z" fill="#666" />
          </Svg>
        </div>
      </div>
    </div>
  );
}

function StatusBar() {
  return (
    <footer className="flex h-[27px] shrink-0 items-center border-t border-[#c6c6c6] bg-[#f3f2f1] text-[13px] tracking-[-0.18px] whitespace-nowrap text-[#444]">
      <span className="ml-[9px] w-[52px] pt-px tracking-[-0.35px]">Listo</span>
      <Svg w={18} h={18}>
        <circle cx="8" cy="3" r="2" stroke={INK} strokeWidth="1.200" />
        <path d="M1 3.500C.5 5 1.500 5.500 5.500 7v3.500L3 16.500c.8 1 1.800.5 2-.3L8 11l2 2M15.500 3.500c.5 1.500-.5 2-5 3.500v3M1 3.500c1-.8 2-.3 4.500 1M15.500 3.500c-1-.8-2-.3-4.500 1M9.500 10l7.500 7.500M17 10l-7 7.500" stroke={INK} strokeWidth="1.200" />
      </Svg>
      <span className="ml-[4px] pt-px">Accesibilidad: es necesario investigar</span>
      <div className="ml-auto flex h-[26px] w-[50px] items-center justify-center bg-[#d0cecc]">
        <Svg w={18} h={17}>
          <path d="M.8.8h16.400v15.400H.8zM.8 6h16.400M.8 11h16.400M6 .8v15.400M12 .8v15.400" stroke={INK} strokeWidth="1.400" />
        </Svg>
      </div>
      <Svg w={18} h={17} className="ml-4">
        <path d="M.8.8h16.400v15.400H.8zM4 3.500h10v10.500H4zM6.500 6.500h5M6.500 9h5M6.500 11.500h5" stroke={INK} strokeWidth="1.300" />
      </Svg>
      <Svg w={18} h={17} className="ml-8">
        <path d="M.8.8h16.400v15.400H.8zM.8 10h10.700V.8M6 .8V10" stroke={INK} strokeWidth="1.400" />
      </Svg>
      <div className="ml-[23px] h-px w-[9px] bg-[#444]" />
      <div className="relative ml-[7px] h-px w-[125px] bg-[#444]">
        <div className="absolute -top-[3px] left-[62px] h-[7px] w-px bg-[#444]" />
        <div className="absolute -top-[7px] left-[64px] h-[14px] w-[6px] bg-[#333]" />
      </div>
      <Svg w={9} h={9} className="ml-[6px]">
        <path d="M4.500 0v9M0 4.500h9" stroke={INK} strokeWidth="1.200" />
      </Svg>
      <span className="mr-[10px] ml-[18px] w-[31px] tracking-[-0.5px]">119%</span>
    </footer>
  );
}

export default function App() {
  return (
    <div className="flex h-[1030px] w-[1920px] flex-col overflow-hidden bg-[#f3f2f1] font-['Open_Sans',sans-serif]">
      <TitleBar />
      <RibbonTabs />
      <Ribbon />
      <Worksheet />
      <SheetTabs />
      <StatusBar />
    </div>
  );
}
